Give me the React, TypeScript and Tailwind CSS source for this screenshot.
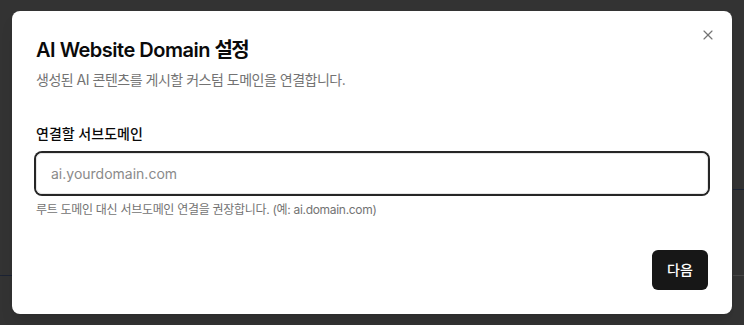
import React from 'react';
import { X } from 'lucide-react';

export default function App() {
  return (
    <div
      className="relative h-[325px] w-full overflow-hidden bg-[#333333] flex items-center justify-center"
      style={{ fontFamily: "Inter, 'Noto Sans CJK KR', sans-serif" }}
    >
      {/* page behind the overlay */}
      <div className="absolute left-0 top-[275px] h-px w-[13px] bg-[#1c2333]" />
      <div className="absolute right-0 top-[189px] h-px w-[11px] bg-[#1c2333]" />
      <div className="absolute right-0 top-[275px] h-px w-[11px] bg-[#474747]" />

      {/* Dialog */}
      <div className="relative w-[720px] rounded-lg bg-white px-6 pb-6 pt-[25px] shadow-lg">
        <button className="absolute right-4 top-4 text-[#525252] opacity-80">
          <X size={16} strokeWidth={1.75} />
        </button>

        {/* Header */}
        <div className="flex flex-col gap-1.5">
          <h2 className="text-xl font-semibold leading-7 tracking-[-0.025em] text-[#0a0a0a]">
            AI Website Domain <span className="tracking-[-0.08em]">설정</span>
          </h2>
          <p className="text-sm leading-5 tracking-[-0.035em] text-[#737373]">생성된 AI 콘텐츠를 게시할 커스텀 도메인을 연결합니다.</p>
        </div>

        {/* Content */}
        <div className="mt-[34px] flex flex-col gap-2">
          <label className="text-sm font-medium leading-5 text-[#0a0a0a]">연결할 서브도메인</label>
          <input
            className="mt-px h-[41px] w-full rounded-md border border-[#e5e5e5] pl-[14px] pr-3 text-sm text-[#0a0a0a] outline-none ring-2 ring-[#262626] placeholder:text-[#8a8a8a]"
            placeholder="ai.yourdomain.com"
          />
          <p className="text-xs leading-4 tracking-[-0.025em] text-[#737373]">루트 도메인 대신 서브도메인 연결을 권장합니다. (예: ai.domain.com)</p>
        </div>

        {/* Footer */}
        <div className="mt-8 flex justify-end">
          <button className="h-10 w-14 rounded-md bg-[#171717] text-sm font-medium text-white">다음</button>
        </div>
      </div>
    </div>
  );
}
